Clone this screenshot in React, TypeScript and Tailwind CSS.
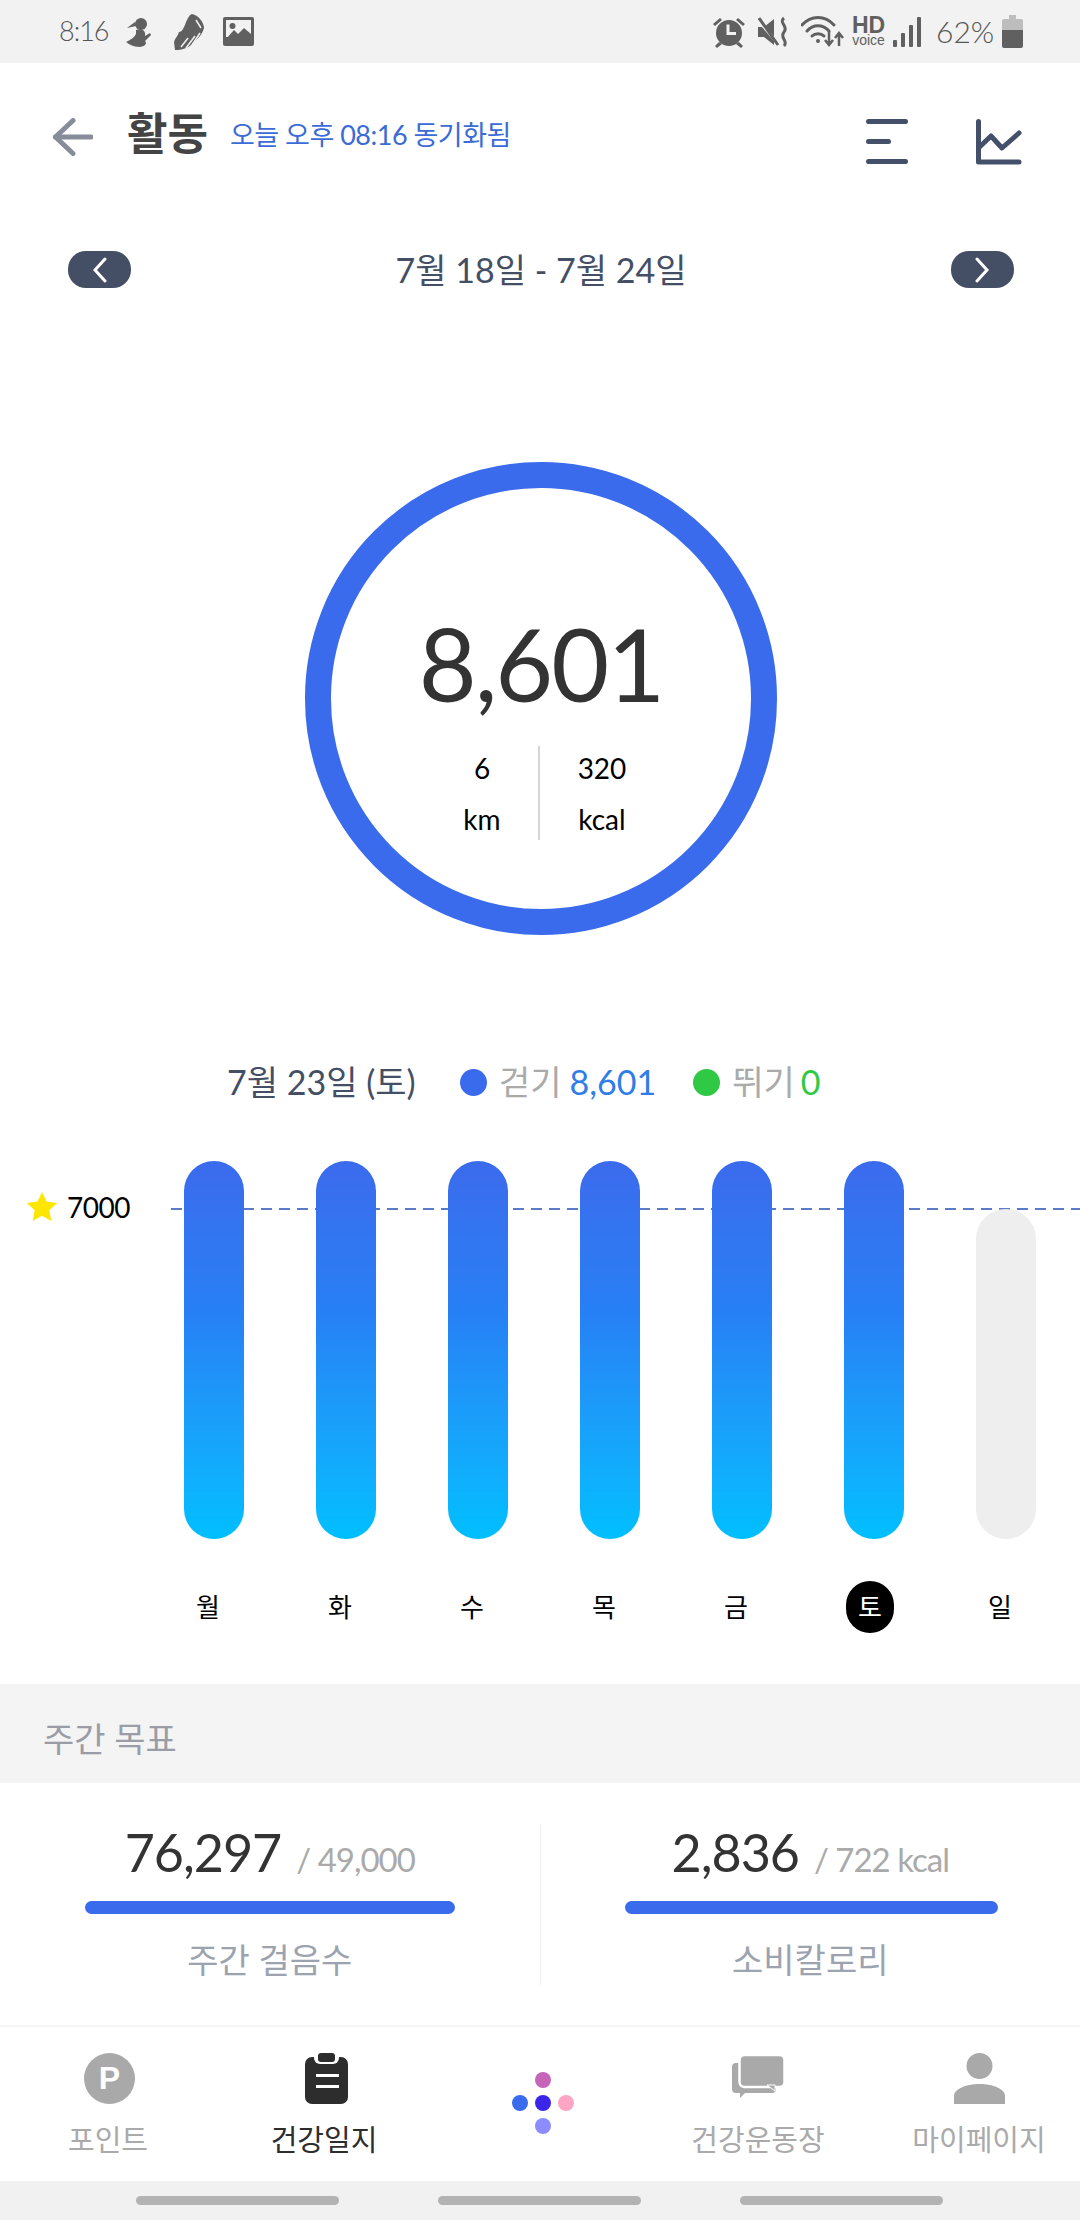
const cjk = "font-['Lato','Noto_Sans_CJK_KR',sans-serif]";

function Arrow() {
  return (
    <svg width="40" height="38" viewBox="0 0 40 38" fill="none" stroke="#868c99" strokeWidth="5" strokeLinecap="round" strokeLinejoin="round">
      <path d="M20 2.5 L2.5 19 L20 35.5" />
      <path d="M2.5 19 H38" />
    </svg>
  );
}

function Pill({ right }: { right?: boolean }) {
  return (
    <div className="w-[63px] h-[37px] rounded-[18px] bg-[#444f66] flex items-center justify-center">
      <svg width="16" height="26" viewBox="0 0 16 26" fill="none" stroke="#fff" strokeWidth="3" strokeLinecap="round">
        <path d={right ? 'M3 2 L13 13 L3 24' : 'M13 2 L3 13 L13 24'} />
      </svg>
    </div>
  );
}

function StatusLeft() {
  return (
    <div className="flex items-center">
      <span className="text-[27px] font-light tracking-[-1px] text-[#555] w-[67px] ml-[59px]">8:16</span>
      <svg width="26" height="30" viewBox="0 0 26 30" fill="#606060">
        <circle cx="15" cy="7" r="6" />
        <path d="M9 5 L1 11 L10 9 Z" />
        <path d="M10 13 C16 11 20 14 19 19 L24 16 L25 18 L19 24 C21 26 20 29 14 30 C7 30 3 27 0 25 C4 23 8 21 10 17 Z" />
      </svg>
      <svg width="30" height="36" viewBox="0 0 30 36" fill="#606060" className="ml-[22px]">
        <path d="M18 0 C24 1 30 8 30 14 C28 22 22 26 18 30 C14 34 8 36 1 36 L0 28 C1 24 4 22 5 18 C8 18 10 14 12 8 C14 4 15 1 18 0 Z" />
        <path d="M7 33 L14 24 M12 34 L21 22 M18 31 L26 19 M22 6 L27 14" stroke="#f2f2f2" strokeWidth="1.5" fill="none" />
      </svg>
      <svg width="31" height="29" viewBox="0 0 31 29" className="ml-[19px]">
        <rect width="31" height="29" rx="2" fill="#606060" />
        <rect x="3" y="3" width="25" height="17" fill="#f2f2f2" />
        <circle cx="9.5" cy="9" r="3" fill="#606060" />
        <path d="M3 22 L11 13 L15 17 L21 11 L28 17 V23 H3 Z" fill="#606060" />
      </svg>
    </div>
  );
}

function StatusRight() {
  return (
    <div className="flex items-center">
      <svg width="34" height="32" viewBox="0 0 34 32" fill="#606060">
        <circle cx="17" cy="17" r="13" />
        <path d="M14.5 8.5 H17.5 V16 H24 V19 H14.5 Z" fill="#f2f2f2" />
        <path d="M1 8 L8 2 L10 4 L3 10 Z M33 8 L26 2 L24 4 L31 10 Z M7 26 L3 30 L5 32 L10 28 Z M27 26 L31 30 L29 32 L24 28 Z" />
      </svg>
      <svg width="32" height="32" viewBox="0 0 32 32" className="ml-[12px]">
        <path d="M0 11 H6 L16 3 V29 L6 21 H0 Z" fill="#606060" />
        <path d="M0 4 L22 30" stroke="#f2f2f2" strokeWidth="3" />
        <path d="M1 2 L20 29" stroke="#606060" strokeWidth="3" />
        <path d="M26 2 C20 7 31 10 26 16 C21 22 31 25 26 30" stroke="#606060" strokeWidth="3" fill="none" />
      </svg>
      <svg width="44" height="32" viewBox="0 0 44 32" fill="none" stroke="#606060" strokeWidth="3" className="ml-[11px]">
        <path d="M1 9 C10 -1 24 -1 33 9" strokeLinecap="round" />
        <path d="M6 15 C12 8 22 8 28 15" strokeLinecap="round" />
        <path d="M11 20 C14 17 20 17 23 20" strokeLinecap="round" />
        <circle cx="17" cy="25" r="2" fill="#606060" stroke="none" />
        <path d="M28 15 V28 M24 24 L28 29 L32 24 M38 30 V18 M34 22 L38 17 L42 22" strokeWidth="2.5" />
      </svg>
      <div className="ml-[7px] w-[33px] flex flex-col items-center font-['Liberation_Sans',sans-serif] text-[#606060]">
        <span className="text-[23px] font-bold leading-[18px]">HD</span>
        <span className="text-[14px] leading-[13px]">voice</span>
      </div>
      <svg width="28" height="30" viewBox="0 0 28 30" fill="#606060" className="ml-[8px]">
        <rect x="0" y="23" width="4" height="7" rx="1" />
        <rect x="8" y="16" width="4" height="14" rx="1" />
        <rect x="16" y="8" width="4" height="22" rx="1" />
        <rect x="24" y="0" width="4" height="30" rx="1" />
      </svg>
      <span className="ml-[15px] w-[66px] text-[30px] font-light text-[#555]">62%</span>
      <svg width="21" height="33" viewBox="0 0 21 33">
        <path d="M7 0 H14 V4 H19 Q21 4 21 6 V15 H0 V6 Q0 4 2 4 H7 Z" fill="#bdbdbd" />
        <path d="M0 15 H21 V31 Q21 33 19 33 H2 Q0 33 0 31 Z" fill="#606060" />
      </svg>
    </div>
  );
}

function Bar({ off }: { off?: boolean }) {
  return (
    <div className="relative w-[60px] h-[378px] flex items-end">
      {off ? (
        <div className="w-full h-[330px] rounded-[30px] bg-[#eeeeee]" />
      ) : (
        <div className="w-full h-full rounded-[30px] bg-gradient-to-b from-[#3b6bed] via-[#2680f5] via-40% to-[#00bfff]" />
      )}
    </div>
  );
}

function Goal({ big, small, label, barClass }: { big: string; small: string; label: string; barClass: string }) {
  return (
    <div className="flex-1 flex flex-col items-center">
      <div className="h-[76px] flex items-baseline">
        <span className="text-[52px] leading-[56px] tracking-[-1px] text-[#333]">{big}</span>
        <span className="ml-[15px] text-[33px] tracking-[-1px] text-[#aaaaaa]">{small}</span>
      </div>
      <div className={`h-[13px] rounded-[7px] bg-[#3b6bed] mt-[2px] ${barClass}`} />
      <div className="mt-[21px] text-[34px] leading-[50px] text-[#9ca3af]">{label}</div>
    </div>
  );
}

function NavItem({ label, active, children, className }: { label: string; active?: boolean; children: React.ReactNode; className?: string }) {
  return (
    <div className={`flex flex-col items-center ${className ?? ''}`}>
      <div className="h-[52px] flex items-center justify-center">{children}</div>
      <div className={`mt-[18px] text-[29px] leading-[36px] whitespace-nowrap ${active ? 'text-[#2d2d2d]' : 'text-[#aaaaaa]'}`}>{label}</div>
    </div>
  );
}

const days = ['월', '화', '수', '목', '금', '토', '일'];

export default function App() {
  return (
    <div className={`w-[1080px] h-[2220px] bg-white flex flex-col overflow-hidden ${cjk}`}>
      <div className="h-[63px] shrink-0 bg-[#f2f2f2] flex items-center justify-between pr-[57px]">
        <StatusLeft />
        <StatusRight />
      </div>

      {/* header */}
      <div className="h-[148px] shrink-0 flex items-center pl-[53px] pr-[58px]">
        <Arrow />
        <span className="ml-[34px] mb-[8px] text-[44px] font-bold text-[#444] leading-none">활동</span>
        <span className="ml-[22px] mb-[6px] text-[27px] tracking-[-0.5px] text-[#3b6bd6] leading-none">오늘 오후 08:16 동기화됨</span>
        <div className="ml-auto mt-[9px] flex items-center gap-[68px]">
          <div className="flex flex-col gap-[15px] w-[42px]">
            <div className="h-[5px] rounded bg-[#44506a]" />
            <div className="h-[5px] w-[25px] rounded bg-[#44506a]" />
            <div className="h-[5px] rounded bg-[#44506a]" />
          </div>
          <svg width="46" height="46" viewBox="0 0 46 46" fill="none" stroke="#44506a" strokeWidth="5" strokeLinecap="round" strokeLinejoin="round">
            <path d="M2.5 2.5 V43 H43" />
            <path d="M2.5 29 L15 17 L26 29 L43 14" />
          </svg>
        </div>
      </div>

      {/* week nav */}
      <div className="mt-[40px] h-[37px] shrink-0 flex items-center justify-between pl-[68px] pr-[66px] text-[#444f66]">
        <Pill />
        <span className="text-[34px] leading-none">7월 18일 - 7월 24일</span>
        <Pill right />
      </div>

      {/* ring */}
      <div className="mt-[174px] shrink-0 self-center ml-[2px] w-[472px] h-[473px] rounded-full border-[26px] border-[#3b6bed] flex flex-col items-center">
        <div className="mt-[125px] h-[100px] flex items-center text-[100px] tracking-[-2px] leading-none text-[#333]">8,601</div>
        <div className="mt-[29px] ml-[8px] flex text-[28px] leading-[52px] text-black">
          <div className="w-[112px] flex flex-col items-center">
            <span>6</span>
            <span className="-mt-[1px]">km</span>
          </div>
          <div className="w-[2px] h-[94px] mt-[4px] bg-[#d5d5d5]" />
          <div className="w-[124px] flex flex-col items-center">
            <span>320</span>
            <span className="-mt-[1px]">kcal</span>
          </div>
        </div>
      </div>

      {/* selected day */}
      <div className="mt-[127px] h-[40px] shrink-0 flex items-center pl-[227px] text-[34px] leading-none">
        <span className="text-[#444f66] w-[233px]">7월 23일 (토)</span>
        <div className="w-[27px] h-[27px] rounded-full bg-[#3b6bed]" />
        <span className="ml-[12px] text-[#aaaaaa]">걷기</span>
        <span className="ml-[8px] text-[#2f7de8]">8,601</span>
        <div className="ml-[37px] w-[27px] h-[27px] rounded-full bg-[#2fc945]" />
        <span className="ml-[12px] text-[#aaaaaa]">뛰기</span>
        <span className="ml-[6px] text-[#2fc945]">0</span>
      </div>

      {/* chart */}
      <div className="relative mt-[59px] h-[378px] shrink-0 flex gap-[72px] pl-[184px]">
        <div className="absolute left-[171px] right-0 top-[47px] h-[2px] bg-[repeating-linear-gradient(90deg,#5a7cc8_0_11px,transparent_11px_18px)]" />
        <div className="absolute left-[26px] top-[31px] flex items-center">
          <svg width="32" height="29" viewBox="0 0 24 23" fill="#ffe600">
            <path d="M12 0 L15.6 7.6 L24 8.7 L17.8 14.4 L19.4 23 L12 18.8 L4.6 23 L6.2 14.4 L0 8.7 L8.4 7.6 Z" />
          </svg>
          <span className="ml-[9px] text-[28px] leading-none text-black tracking-[-0.5px]">7000</span>
        </div>
        {days.map((d, i) => (
          <Bar key={d} off={i === 6} />
        ))}
      </div>

      {/* day labels */}
      <div className="mt-[42px] h-[52px] shrink-0 flex gap-[80px] pl-[182px] text-[26px] text-black">
        {days.map((d, i) => (
          <div key={d} className="w-[52px] h-[52px] shrink-0 flex items-center justify-center">
            <div className={i === 5 ? 'w-[52px] h-[52px] ml-[4px] rounded-full bg-black text-white flex items-center justify-center' : ''}>{d}</div>
          </div>
        ))}
      </div>

      {/* weekly goal */}
      <div className="mt-[51px] h-[99px] shrink-0 bg-[#f4f4f5] flex items-center pl-[43px] pt-[10px] text-[34px] text-[#9a9da6]">주간 목표</div>

      <div className="mt-[41px] h-[161px] shrink-0 flex">
        <Goal big="76,297" small="/ 49,000" label="주간 걸음수" barClass="w-[370px]" />
        <div className="w-[1px] bg-[#eeeeee]" />
        <Goal big="2,836" small="/ 722 kcal" label="소비칼로리" barClass="w-[373px] ml-[3px]" />
      </div>

      {/* bottom nav */}
      <div className="mt-[40px] h-[156px] shrink-0 border-t-2 border-[#f6f6f6] pt-[25px] grid grid-cols-5">
        <NavItem label="포인트">
          <div className="w-[51px] h-[51px] ml-[3px] rounded-full bg-[#a9a9a9] flex items-center justify-center text-white font-bold text-[32px] leading-none font-['Liberation_Sans',sans-serif]">P</div>
        </NavItem>
        <NavItem label="건강일지" active>
          <svg width="44" height="51" viewBox="0 0 44 51" className="ml-[6px]">
            <rect x="0" y="4" width="43" height="47" rx="7" fill="#2d2d2d" />
            <rect x="9" y="-2" width="25" height="13" rx="6" fill="#fff" />
            <rect x="13" y="0" width="17" height="9" rx="3" fill="#2d2d2d" />
            <rect x="11" y="21" width="23" height="3" fill="#fff" />
            <rect x="11" y="32" width="23" height="3" fill="#fff" />
          </svg>
        </NavItem>
        <div className="pt-[16px] pl-[76px]">
          <div className="w-[70px] h-[70px] grid grid-cols-3 grid-rows-3 place-items-center">
            <div />
            <div className="w-[16px] h-[16px] rounded-full bg-[#c566bb]" />
            <div />
            <div className="w-[16px] h-[16px] rounded-full bg-[#3b6bed]" />
            <div className="w-[16px] h-[16px] rounded-full bg-[#3a25e8]" />
            <div className="w-[16px] h-[16px] rounded-full bg-[#ffa5c4]" />
            <div />
            <div className="w-[16px] h-[16px] rounded-full bg-[#8c8cff]" />
          </div>
        </div>
        <NavItem label="건강운동장" className="ml-[4px]">
          <svg width="52" height="42" viewBox="0 0 52 42" fill="#a9a9a9" className="mt-[-2px]">
            <rect x="0" y="7" width="44" height="30" rx="4" />
            <path d="M8 35 V42 L15 35 Z" />
            <rect x="7.5" y="-1" width="45" height="32" rx="5" stroke="#fff" strokeWidth="2.5" />
            <path d="M35 29 L43 35 V29 Z" stroke="#fff" strokeWidth="1" />
          </svg>
        </NavItem>
        <NavItem label="마이페이지" className="ml-[14px]">
          <svg width="51" height="51" viewBox="0 0 51 51" fill="#a9a9a9">
            <circle cx="25.5" cy="13" r="13" />
            <path d="M0 51 V43 C0 36 12 31 25.5 31 C39 31 51 36 51 43 V51 Z" />
          </svg>
        </NavItem>
      </div>

      <div className="flex-1 bg-[#f1f1f1] flex items-start pt-[15px] pl-[136px] gap-[99px]">
        <div className="w-[203px] h-[9px] rounded-full bg-[#b3b3b3]" />
        <div className="w-[203px] h-[9px] rounded-full bg-[#b3b3b3]" />
        <div className="w-[203px] h-[9px] rounded-full bg-[#b3b3b3]" />
      </div>
    </div>
  );
}
